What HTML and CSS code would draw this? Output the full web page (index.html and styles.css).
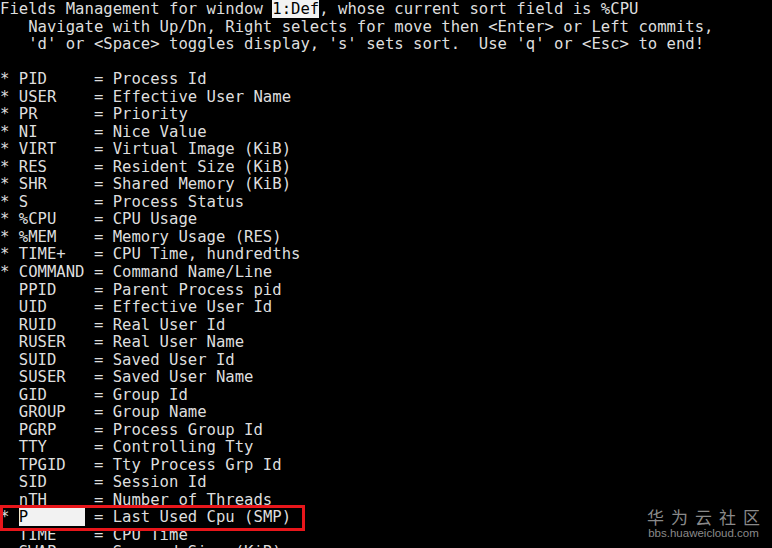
FILE: index.html
```html
<!DOCTYPE html>
<html>
<head>
<meta charset="utf-8">
<link rel="stylesheet" href="styles.css">
</head>
<body>
<div class="term">
<div class="line">Fields Management for window <span class="hl">1:Def</span>, whose current sort field is %CPU</div>
<div class="line">   Navigate with Up/Dn, Right selects for move then &lt;Enter&gt; or Left commits,</div>
<div class="line">   'd' or &lt;Space&gt; toggles display, 's' sets sort.  Use 'q' or &lt;Esc&gt; to end!</div>
<div class="line"> </div>
<div class="line">* PID     = Process Id</div>
<div class="line">* USER    = Effective User Name</div>
<div class="line">* PR      = Priority</div>
<div class="line">* NI      = Nice Value</div>
<div class="line">* VIRT    = Virtual Image (KiB)</div>
<div class="line">* RES     = Resident Size (KiB)</div>
<div class="line">* SHR     = Shared Memory (KiB)</div>
<div class="line">* S       = Process Status</div>
<div class="line">* %CPU    = CPU Usage</div>
<div class="line">* %MEM    = Memory Usage (RES)</div>
<div class="line">* TIME+   = CPU Time, hundredths</div>
<div class="line">* COMMAND = Command Name/Line</div>
<div class="line">  PPID    = Parent Process pid</div>
<div class="line">  UID     = Effective User Id</div>
<div class="line">  RUID    = Real User Id</div>
<div class="line">  RUSER   = Real User Name</div>
<div class="line">  SUID    = Saved User Id</div>
<div class="line">  SUSER   = Saved User Name</div>
<div class="line">  GID     = Group Id</div>
<div class="line">  GROUP   = Group Name</div>
<div class="line">  PGRP    = Process Group Id</div>
<div class="line">  TTY     = Controlling Tty</div>
<div class="line">  TPGID   = Tty Process Grp Id</div>
<div class="line">  SID     = Session Id</div>
<div class="line">  nTH     = Number of Threads</div>
<div class="line boxed">* <span class="hl">P      </span> = Last Used Cpu (SMP)</div>
<div class="line">  TIME    = CPU Time</div>
<div class="line">  SWAP    = Swapped Size (KiB)</div>
</div>
<div class="watermark">
<div class="wm-cn">华为云社区</div>
<div class="wm-en">bbs.huaweicloud.com</div>
</div>
</body>
</html>
```

FILE: styles.css
```css
html, body {
  margin: 0;
  padding: 0;
  background: #000;
  width: 772px;
  height: 548px;
  overflow: hidden;
}
.term {
  font-family: "DejaVu Sans Mono", monospace;
  font-size: 15.6px;
  line-height: 17.54px;
  color: #dedede;
  padding-top: 1px;
}
.line {
  white-space: pre;
  height: 17.54px;
}
.hl {
  background: #f2f2f2;
  color: #000;
}
.boxed {
  position: relative;
}
.boxed::after {
  content: "";
  position: absolute;
  left: 0;
  top: -4px;
  width: 299px;
  height: 20px;
  border: 3px solid #e8161b;
}
.watermark {
  position: absolute;
  right: 12px;
  bottom: 8px;
  display: flex;
  flex-direction: column;
  align-items: center;
  color: #8a8a8a;
}
.wm-cn {
  font-family: "Noto Sans CJK SC", sans-serif;
  font-size: 17px;
  line-height: 20px;
  letter-spacing: 7px;
  margin-right: -7px;
}
.wm-en {
  font-family: "Liberation Sans", sans-serif;
  font-size: 11.5px;
  line-height: 13px;
}
```
